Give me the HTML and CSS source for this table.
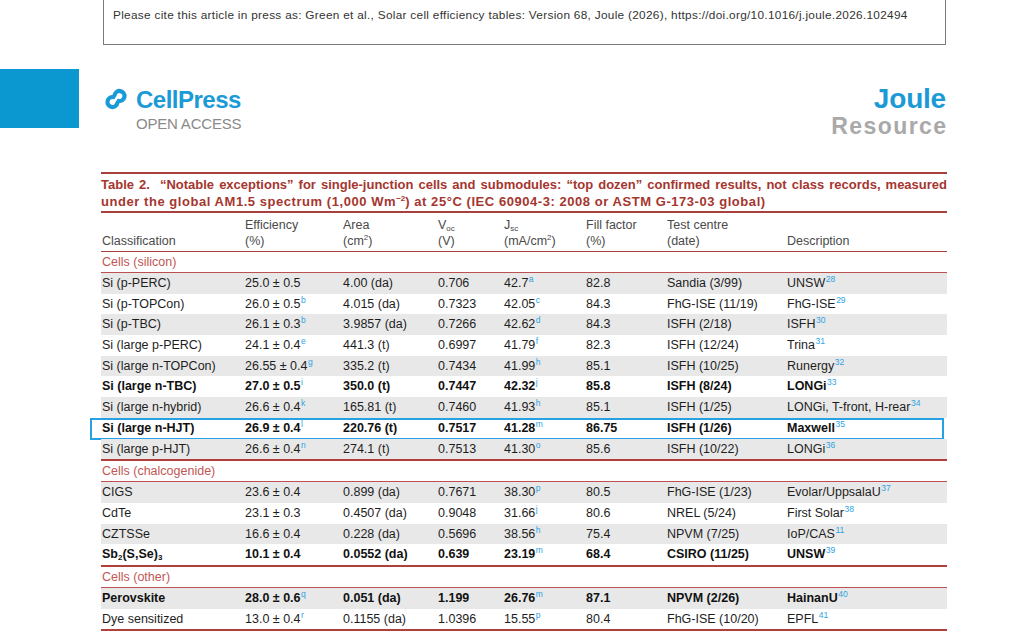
FILE: index.html
```html
<!DOCTYPE html>
<html lang="en">
<head>
<meta charset="utf-8">
<title>Solar cell efficiency tables – Table 2</title>
<link rel="stylesheet" href="styles.css">
</head>
<body>
<div class="cite"><p>Please cite this article in press as: Green et al., Solar cell efficiency tables: Version 68, Joule (2026), https://doi.org/10.1016/j.joule.2026.102494</p></div>

<header class="masthead">
  <div class="brand-bar"></div>
  <div class="cellpress">
    <div class="cp-top">
      <svg class="cp-icon" width="26" height="22" viewBox="0 0 26 22" aria-hidden="true">
        <g fill="none" stroke="#1a9ad6" stroke-width="4.2" stroke-linecap="round">
          <path d="M11.6 7.1 A5 5 0 1 1 15.6 12.9"/>
          <path d="M14.4 14.9 A5 5 0 1 1 10.4 9.1"/>
        </g>
      </svg>
      <span class="cp-name">CellPress</span>
    </div>
    <div class="cp-oa">OPEN ACCESS</div>
  </div>
  <div class="journal">
    <div class="j-name">Joule</div>
    <div class="j-type">Resource</div>
  </div>
</header>

<section class="tbl">
  <div class="caption">
    <div class="cap-l1">Table 2.&nbsp; “Notable exceptions” for single-junction cells and submodules: “top dozen” confirmed results, not class records, measured</div>
    <div class="cap-l2">under the global AM1.5 spectrum (1,000 Wm<sup>−2</sup>) at 25°C (IEC 60904-3: 2008 or ASTM G-173-03 global)</div>
  </div>

  <div class="row head">
    <div class="c"><br>Classification</div>
    <div class="c">Efficiency<br>(%)</div>
    <div class="c">Area<br>(cm<sup>2</sup>)</div>
    <div class="c">V<sub>oc</sub><br>(V)</div>
    <div class="c">J<sub>sc</sub><br>(mA/cm<sup>2</sup>)</div>
    <div class="c">Fill factor<br>(%)</div>
    <div class="c">Test centre<br>(date)</div>
    <div class="c"><br>Description</div>
  </div>

  <div class="group">Cells (silicon)</div>
  <div class="rows">
    <div class="row"><div class="c">Si (p-PERC)</div><div class="c">25.0 ± 0.5</div><div class="c">4.00 (da)</div><div class="c">0.706</div><div class="c">42.7<span class="fn">a</span></div><div class="c">82.8</div><div class="c">Sandia (3/99)</div><div class="c">UNSW<span class="fn">28</span></div></div>
    <div class="row"><div class="c">Si (p-TOPCon)</div><div class="c">26.0 ± 0.5<span class="fn">b</span></div><div class="c">4.015 (da)</div><div class="c">0.7323</div><div class="c">42.05<span class="fn">c</span></div><div class="c">84.3</div><div class="c">FhG-ISE (11/19)</div><div class="c">FhG-ISE<span class="fn">29</span></div></div>
    <div class="row"><div class="c">Si (p-TBC)</div><div class="c">26.1 ± 0.3<span class="fn">b</span></div><div class="c">3.9857 (da)</div><div class="c">0.7266</div><div class="c">42.62<span class="fn">d</span></div><div class="c">84.3</div><div class="c">ISFH (2/18)</div><div class="c">ISFH<span class="fn">30</span></div></div>
    <div class="row"><div class="c">Si (large p-PERC)</div><div class="c">24.1 ± 0.4<span class="fn">e</span></div><div class="c">441.3 (t)</div><div class="c">0.6997</div><div class="c">41.79<span class="fn">f</span></div><div class="c">82.3</div><div class="c">ISFH (12/24)</div><div class="c">Trina<span class="fn">31</span></div></div>
    <div class="row"><div class="c">Si (large n-TOPCon)</div><div class="c">26.55 ± 0.4<span class="fn">g</span></div><div class="c">335.2 (t)</div><div class="c">0.7434</div><div class="c">41.99<span class="fn">h</span></div><div class="c">85.1</div><div class="c">ISFH (10/25)</div><div class="c">Runergy<span class="fn">32</span></div></div>
    <div class="row bold"><div class="c">Si (large n-TBC)</div><div class="c">27.0 ± 0.5<span class="fn">i</span></div><div class="c">350.0 (t)</div><div class="c">0.7447</div><div class="c">42.32<span class="fn">j</span></div><div class="c">85.8</div><div class="c">ISFH (8/24)</div><div class="c">LONGi<span class="fn">33</span></div></div>
    <div class="row"><div class="c">Si (large n-hybrid)</div><div class="c">26.6 ± 0.4<span class="fn">k</span></div><div class="c">165.81 (t)</div><div class="c">0.7460</div><div class="c">41.93<span class="fn">h</span></div><div class="c">85.1</div><div class="c">ISFH (1/25)</div><div class="c">LONGi, T-front, H-rear<span class="fn">34</span></div></div>
    <div class="row bold marked"><div class="c">Si (large n-HJT)</div><div class="c">26.9 ± 0.4<span class="fn">l</span></div><div class="c">220.76 (t)</div><div class="c">0.7517</div><div class="c">41.28<span class="fn">m</span></div><div class="c">86.75</div><div class="c">ISFH (1/26)</div><div class="c">Maxwell<span class="fn">35</span></div></div>
    <div class="row"><div class="c">Si (large p-HJT)</div><div class="c">26.6 ± 0.4<span class="fn">n</span></div><div class="c">274.1 (t)</div><div class="c">0.7513</div><div class="c">41.30<span class="fn">o</span></div><div class="c">85.6</div><div class="c">ISFH (10/22)</div><div class="c">LONGi<span class="fn">36</span></div></div>
  </div>

  <div class="group">Cells (chalcogenide)</div>
  <div class="rows">
    <div class="row"><div class="c">CIGS</div><div class="c">23.6 ± 0.4</div><div class="c">0.899 (da)</div><div class="c">0.7671</div><div class="c">38.30<span class="fn">p</span></div><div class="c">80.5</div><div class="c">FhG-ISE (1/23)</div><div class="c">Evolar/UppsalaU<span class="fn">37</span></div></div>
    <div class="row"><div class="c">CdTe</div><div class="c">23.1 ± 0.3</div><div class="c">0.4507 (da)</div><div class="c">0.9048</div><div class="c">31.66<span class="fn">j</span></div><div class="c">80.6</div><div class="c">NREL (5/24)</div><div class="c">First Solar<span class="fn">38</span></div></div>
    <div class="row"><div class="c">CZTSSe</div><div class="c">16.6 ± 0.4</div><div class="c">0.228 (da)</div><div class="c">0.5696</div><div class="c">38.56<span class="fn">h</span></div><div class="c">75.4</div><div class="c">NPVM (7/25)</div><div class="c">IoP/CAS<span class="fn">11</span></div></div>
    <div class="row bold"><div class="c">Sb<sub>2</sub>(S,Se)<sub>3</sub></div><div class="c">10.1 ± 0.4</div><div class="c">0.0552 (da)</div><div class="c">0.639</div><div class="c">23.19<span class="fn">m</span></div><div class="c">68.4</div><div class="c">CSIRO (11/25)</div><div class="c">UNSW<span class="fn">39</span></div></div>
  </div>

  <div class="group">Cells (other)</div>
  <div class="rows">
    <div class="row bold"><div class="c">Perovskite</div><div class="c">28.0 ± 0.6<span class="fn">q</span></div><div class="c">0.051 (da)</div><div class="c">1.199</div><div class="c">26.76<span class="fn">m</span></div><div class="c">87.1</div><div class="c">NPVM (2/26)</div><div class="c">HainanU<span class="fn">40</span></div></div>
    <div class="row"><div class="c">Dye sensitized</div><div class="c">13.0 ± 0.4<span class="fn">r</span></div><div class="c">0.1155 (da)</div><div class="c">1.0396</div><div class="c">15.55<span class="fn">p</span></div><div class="c">80.4</div><div class="c">FhG-ISE (10/20)</div><div class="c">EPFL<span class="fn">41</span></div></div>
  </div>
</section>
</body>
</html>
```

FILE: styles.css
```css
* { box-sizing: border-box; }

html, body {
  margin: 0;
  padding: 0;
  background: #ffffff;
  font-family: "Liberation Sans", Arial, sans-serif;
  color: #1e1e1e;
  overflow: hidden;
}

/* citation box */
.cite {
  margin-left: 103px;
  width: 843px;
  height: 45px;
  border: 1.5px solid #7a7a7a;
  border-top: 0;
  padding: 8px 0 0 9px;
}
.cite p {
  margin: 0;
  font-size: 11.8px;
  line-height: 14px;
  letter-spacing: 0.3px;
  color: #333333;
  white-space: nowrap;
}

/* masthead */
.masthead {
  display: flex;
  align-items: flex-start;
  height: 127px;
}
.brand-bar {
  width: 79px;
  height: 59px;
  margin-top: 24px;
  background: #0b98d0;
}
.cellpress {
  margin-left: 24px;
  margin-top: 43px;
}
.cp-top {
  display: flex;
  align-items: center;
}
.cp-icon {
  display: block;
  margin-right: 7px;
  margin-top: -3px;
}
.cp-name {
  font-size: 24px;
  line-height: 24px;
  font-weight: 700;
  letter-spacing: -0.5px;
  color: #1a9ad6;
}
.cp-oa {
  margin-top: 4px;
  margin-left: 33px;
  font-size: 15px;
  line-height: 15px;
  letter-spacing: -0.2px;
  color: #8a8a8a;
}
.journal {
  margin-left: auto;
  margin-right: 78px;
  margin-top: 40px;
  text-align: right;
  font-weight: 700;
}
.j-name {
  font-size: 28px;
  line-height: 28px;
  color: #1b9ad6;
  letter-spacing: -0.2px;
}
.j-type {
  margin-top: 2px;
  font-size: 23px;
  line-height: 23px;
  color: #a9a9a9;
  letter-spacing: 1.4px;
  margin-right: -1.4px;
}

/* table */
.tbl {
  margin-left: 101px;
  width: 846px;
}
.caption {
  border-top: 2px solid #a8413e;
  border-bottom: 2px solid #a8413e;
  padding: 3px 0 1px;
  font-size: 13px;
  line-height: 16.5px;
  font-weight: 700;
  color: #a5362f;
}
.cap-l1 {
  white-space: nowrap;
  text-align: justify;
  text-align-last: justify;
}
.cap-l2 {
  white-space: nowrap;
  letter-spacing: 0.55px;
}
.caption sup {
  font-size: 8px;
  line-height: 0;
  vertical-align: 5px;
  letter-spacing: 0;
}

.row {
  display: grid;
  grid-template-columns: 143px 98px 95px 66px 82px 81px 120px 161px;
  height: 20.7px;
  font-size: 12.5px;
  line-height: 20.7px;
  position: relative;
}
.row .c {
  padding-left: 1px;
  white-space: nowrap;
}
.rows .row:nth-child(odd) {
  background: #e8e8e8;
}
.rows {
  border-bottom: 2px solid #b1403d;
}
.row.bold {
  font-weight: 700;
  color: #111111;
}
.row.marked::after {
  content: "";
  position: absolute;
  left: -11px;
  right: 3px;
  top: 0;
  bottom: -1px;
  border: 2px solid #26a1e2;
}

.row.head {
  height: auto;
  line-height: 16px;
  padding: 4px 0 2px;
  color: #4a4a4a;
  border-bottom: 1.5px solid #a8413e;
}
.head sub, .row sub {
  font-size: 8px;
  line-height: 0;
  vertical-align: -2px;
}
.head sup {
  font-size: 8px;
  line-height: 0;
  vertical-align: 5px;
}

.group {
  height: 21px;
  line-height: 21px;
  padding-left: 1px;
  font-size: 12.5px;
  color: #c25654;
  border-bottom: 1.5px solid #bd5050;
}

.fn {
  color: #2ea3e3;
  font-size: 8.5px;
  font-weight: 400;
  line-height: 0;
  vertical-align: 5px;
  margin-left: 0.5px;
}
```
